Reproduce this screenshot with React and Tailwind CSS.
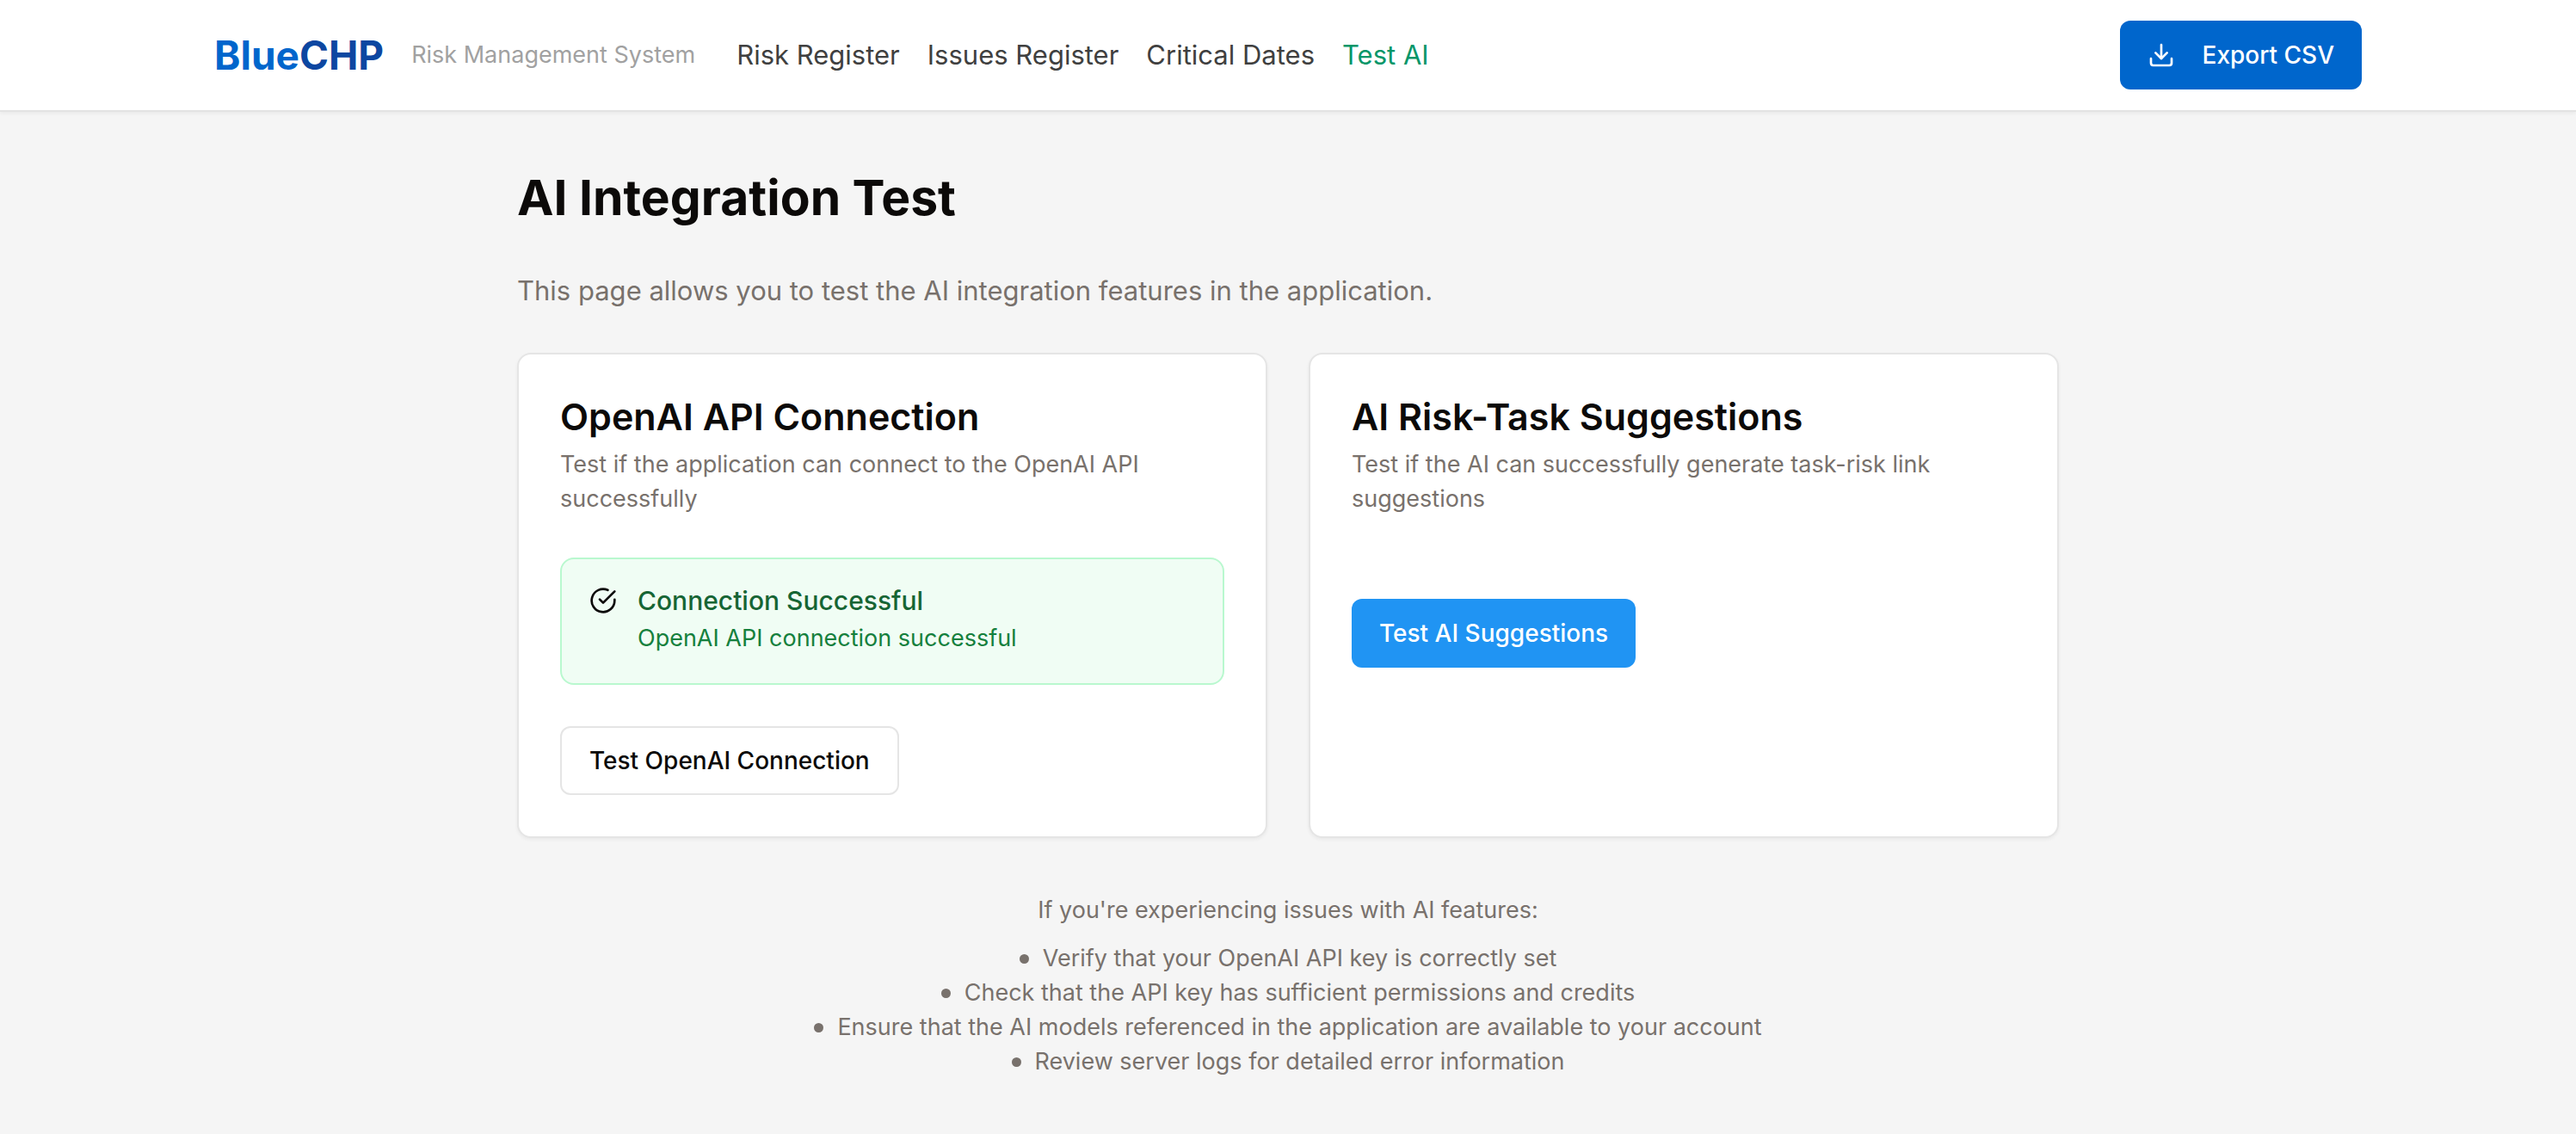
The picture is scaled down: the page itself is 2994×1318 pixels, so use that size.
const navLinks = [
  { label: "Risk Register", color: "text-neutral-700" },
  { label: "Issues Register", color: "text-neutral-700" },
  { label: "Critical Dates", color: "text-neutral-700" },
  { label: "Test AI", color: "text-[#059669]" },
];

const tips = [
  "Verify that your OpenAI API key is correctly set",
  "Check that the API key has sufficient permissions and credits",
  "Ensure that the AI models referenced in the application are available to your account",
  "Review server logs for detailed error information",
];

function Icon({ className, children }) {
  return (
    <svg
      viewBox="0 0 24 24"
      fill="none"
      stroke="currentColor"
      strokeWidth="2"
      strokeLinecap="round"
      strokeLinejoin="round"
      aria-hidden="true"
      className={className}
    >
      {children}
    </svg>
  );
}

function Header() {
  return (
    <header className="border-b-2 border-[#e3e3e3] bg-white shadow-[0_2px_4px_rgba(0,0,0,0.05)]">
      <div className="mx-auto flex h-32 max-w-[2560px] items-center justify-between px-8">
        <div className="flex items-center">
          <a href="#" className="text-[46px] leading-[64px] font-bold text-[#0066cc]">
            Blue<span className="text-[#0d47a1]">CHP</span>
          </a>
          <span className="ml-8 text-[27px] leading-10 text-neutral-400">Risk Management System</span>
          <nav className="ml-12 flex gap-8 text-[31px] leading-[48px]">
            {navLinks.map((link) => (
              <a key={link.label} href="#" className={link.color}>
                {link.label}
              </a>
            ))}
          </nav>
        </div>
        <button type="button" className="flex h-20 items-center gap-8 rounded-xl bg-[#0066cc] px-8 text-[28px] font-medium text-white">
          <Icon className="size-8">
            <path d="M21 15v4a2 2 0 0 1-2 2H5a2 2 0 0 1-2-2v-4" />
            <path d="m7 10 5 5 5-5" />
            <path d="M12 15V3" />
          </Icon>
          Export CSV
        </button>
      </div>
    </header>
  );
}

function Card({ title, description, children }) {
  return (
    <section className="rounded-2xl border-2 border-[#e5e5e5] bg-white p-12 shadow-[0_2px_4px_rgba(0,0,0,0.05)]">
      <h2 className="text-[43px] leading-[48px] font-semibold">{title}</h2>
      <p className="mt-3 text-[27px] leading-10 text-[#78716c]">{description}</p>
      {children}
    </section>
  );
}

export default function App() {
  return (
    <div className="min-h-screen bg-[#f5f5f5] font-['Inter',sans-serif] text-[#0c0a09]">
      <Header />
      <main className="mx-auto max-w-[1792px] py-16">
        <h1 className="text-[57px] leading-[72px] font-bold">AI Integration Test</h1>
        <p className="mt-12 text-[31px] leading-[48px] text-[#78716c]">
          This page allows you to test the AI integration features in the application.
        </p>
        <div className="mt-12 grid grid-cols-2 gap-12">
          <Card
            title="OpenAI API Connection"
            description="Test if the application can connect to the OpenAI API successfully"
          >
            <div role="status" className="mt-12 flex gap-6 rounded-2xl border-2 border-green-200 bg-green-50 p-8">
              <Icon className="size-8 shrink-0">
                <path d="M22 11.08V12a10 10 0 1 1-5.93-9.14" />
                <path d="m9 11 3 3L22 4" />
              </Icon>
              <div>
                <h3 className="text-[30px] leading-8 font-medium text-[#166534]">Connection Successful</h3>
                <p className="mt-2 text-[27px] leading-10 text-[#15803d]">OpenAI API connection successful</p>
              </div>
            </div>
            <button type="button" className="mt-12 h-20 rounded-xl border-2 border-[#e5e5e5] bg-white px-8 text-[28px] font-medium">
              Test OpenAI Connection
            </button>
          </Card>
          <Card
            title="AI Risk-Task Suggestions"
            description="Test if the AI can successfully generate task-risk link suggestions"
          >
            <button type="button" className="mt-24 h-20 rounded-xl bg-[#2094f3] px-8 text-[28px] font-medium text-white">
              Test AI Suggestions
            </button>
          </Card>
        </div>
        <div className="mt-16 text-center text-[27px] leading-10 text-[#78716c]">
          <p>If you're experiencing issues with AI features:</p>
          <ul className="mt-4">
            {tips.map((tip) => (
              <li key={tip} className="flex items-center justify-center gap-4">
                <span aria-hidden="true" className="size-[11px] rounded-full bg-current" />
                {tip}
              </li>
            ))}
          </ul>
        </div>
      </main>
    </div>
  );
}
